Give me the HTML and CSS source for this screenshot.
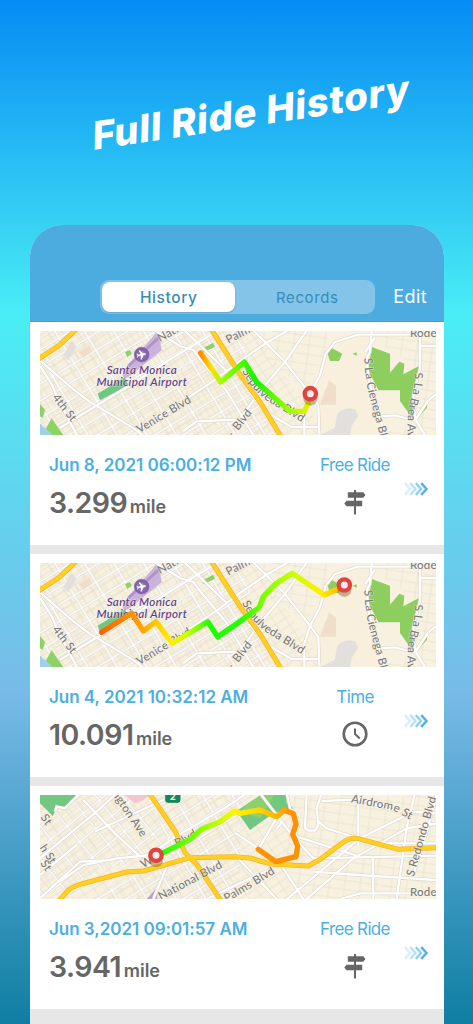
FILE: index.html
```
<!DOCTYPE html>
<html lang="en">
<head>
 <meta charset="UTF-8">
 <meta name="viewport" content="width=device-width,initial-scale=1.0">
 <title>Full Ride History</title>
 <link rel="stylesheet" href="styles.css">
</head>
<body>
<!-- shared shapes -->
<svg class="defs" width="0" height="0">
 <defs>
  <pattern id="grid" width="76" height="44" patternUnits="userSpaceOnUse" patternTransform="rotate(-31)">
   <path class="lane" d="M0 22H76M19 0V44M57 0V44"/>
   <path class="street-edge" d="M0 4H76M38 0V44"/>
   <path class="street-fill" d="M0 4H76M38 0V44"/>
  </pattern>
  <pattern id="fine" width="34" height="24" patternUnits="userSpaceOnUse" patternTransform="rotate(-33)">
   <path class="lane" d="M0 12H34M17 0V24"/>
  </pattern>
  <pattern id="grid-b" width="62" height="60" patternUnits="userSpaceOnUse" patternTransform="rotate(-39)">
   <path class="lane" d="M0 20H62M0 40H62M31 0V60"/>
   <path class="street-edge" d="M0 4H62M4 0V60"/>
   <path class="street-fill" d="M0 4H62M4 0V60"/>
  </pattern>
  <pattern id="loose" width="46" height="28" patternUnits="userSpaceOnUse" patternTransform="rotate(8)">
   <path class="lane" d="M0 14H46M23 0V28"/>
  </pattern>
  <linearGradient id="route1" gradientUnits="userSpaceOnUse" x1="482" x2="812">
   <stop offset="0" stop-color="#ff8a00"/><stop offset=".1" stop-color="#ffe100"/>
   <stop offset=".19" stop-color="#9dff00"/><stop offset=".5" stop-color="#12f500"/>
   <stop offset=".8" stop-color="#9dff00"/><stop offset="1" stop-color="#eef000"/>
  </linearGradient>
  <linearGradient id="route2" gradientUnits="userSpaceOnUse" x1="185" x2="900">
   <stop offset="0" stop-color="#ff6200"/><stop offset=".16" stop-color="#ffa000"/>
   <stop offset=".29" stop-color="#fff000"/><stop offset=".36" stop-color="#c8ff00"/>
   <stop offset=".45" stop-color="#20ff00"/><stop offset=".58" stop-color="#20ff00"/>
   <stop offset=".69" stop-color="#84ff00"/><stop offset=".81" stop-color="#ccff00"/>
   <stop offset=".92" stop-color="#ffee00"/><stop offset="1" stop-color="#ffb400"/>
  </linearGradient>
  <linearGradient id="route3" gradientUnits="userSpaceOnUse" x1="360" x2="735">
   <stop offset="0" stop-color="#1fff00"/><stop offset=".3" stop-color="#80ff00"/>
   <stop offset=".6" stop-color="#fff600"/><stop offset=".8" stop-color="#ffd400"/>
   <stop offset="1" stop-color="#ffa000"/>
  </linearGradient>
  <radialGradient id="badge"><stop offset="0" stop-color="#a18bc5"/><stop offset="1" stop-color="#75599f"/></radialGradient>

  <symbol id="pin" viewBox="-28 -28 56 68">
   <ellipse cx="0" cy="14" rx="21" ry="22" fill="#6b5b2a" opacity=".4"/>
   <circle r="17" fill="#f0eeec" stroke="#e2433f" stroke-width="13"/>
  </symbol>

  <!-- West LA base map -->
  <symbol id="westla" viewBox="0 0 1188 312">
   <rect width="1188" height="312" fill="#f8f1df"/>
   <path fill="url(#fine)" d="M0 0H640L860 312H0z"/>
   <path fill="url(#grid)" d="M0 0H600L700 312H0z"/>
   <path fill="url(#loose)" d="M640 0H860V60L800 180L650 60zM1000 0H1188V312H1010L1120 280L1130 110L1010 30z"/>
   <path fill="#f8efdd" d="M860 60L960 20H985L985 150L1010 312H845L835 200z"/>
   <path fill="#efdfca" d="M115 63L150 43L155 63L130 80zM867 148L888 163V221H840z"/>
   <path fill="#e2dfdd" d="M70 73L95 28L110 48L85 88zM840 312L885 290L890 255Q905 225 945 235L955 255L935 285L930 312z"/>
   <path fill="#c9b2dc" d="M355 -2L365 58L265 138Q240 150 255 113z"/>
   <path stroke="#b094c8" stroke-width="9" d="M365 12L265 105"/>
   <path fill="#6fc782" d="M173 188L255 138L265 163L180 208z"/>
   <path fill="#8ed165" d="M255 63L270 57L275 68L262 78zM485 53L520 35L525 48L490 63zM0 218L15 238L8 262L0 255zM35 262L70 312H35L15 298z"/>
   <path fill="#9fd0ee" d="M0 278L35 308V312H0z"/>
   <path fill="#8dce5f" d="M875 51L907 68L897 90H870L863 68zM938 68L950 64V75zM995 48L1050 68V125L1078 92L1093 98L1090 130L1137 105L1120 205L1125 263L1160 218L1162 228L1125 273L1080 210V178H1015L985 118z"/>
   <g class="street-edge">
    <path d="M0 88L100 175L150 213L210 248L290 298L310 315M0 105L35 160L50 195L110 312M60 290L270 163L410 73L460 43L540 -5M290 303L460 190L530 143L600 90L675 38L785 -27M430 300L470 271L600 265L660 180L735 93L800 -2M625 -17L685 43L735 93L810 188L835 223L838 308M1190 11H955L885 33L857 68L840 133L810 188L793 243V313M625 183L695 253L755 288H835"/>
    <path d="M995 -2L990 63L980 83L985 143L1015 243L1035 313M1140 -2V113L1120 193L1125 263L1155 313M1190 188L1165 208L1125 268L1065 253L1015 257M1140 45H1190M340 -5L420 45L460 57L485 90L560 180L640 312M1005 20L975 63M430 -5L560 120"/>
   </g>
   <g class="street-fill wide">
    <path d="M0 88L100 175L150 213L210 248L290 298L310 315M0 105L35 160L50 195L110 312M60 290L270 163L410 73L460 43L540 -5M290 303L460 190L530 143L600 90L675 38L785 -27M430 300L470 271L600 265L660 180L735 93L800 -2M625 -17L685 43L735 93L810 188L835 223L838 308M1190 11H955L885 33L857 68L840 133L810 188L793 243V313M625 183L695 253L755 288H835"/>
    <path d="M995 -2L990 63L980 83L985 143L1015 243L1035 313M1140 -2V113L1120 193L1125 263L1155 313M1190 188L1165 208L1125 268L1065 253L1015 257M1140 45H1190M340 -5L420 45L460 57L485 90L560 180L640 312M1005 20L975 63M430 -5L560 120"/>
   </g>
   <path class="freeway-edge" d="M-5 84L55 45L110 -6M512 -8L570 83L600 130L660 213L725 320"/>
   <path class="freeway" d="M-5 84L55 45L110 -6M512 -8L570 83L600 130L660 213L725 320"/>
   <g class="road-name">
    <text transform="translate(36 200) rotate(52)">4th St</text>
    <text transform="translate(360 34) rotate(-29)">Natio</text>
    <text transform="translate(565 38) rotate(-27)">Palm</text>
    <text transform="translate(298 307) rotate(-31)">Venice Blvd</text>
    <text transform="translate(594 300) rotate(-52)">Blvd</text>
    <text transform="translate(580 326) rotate(-52)">r</text>
    <path id="sepulveda" fill="none" stroke="none" d="M606 120Q635 183 700 221L805 286"/>
    <text><textPath href="#sepulveda">Sepulveda Blvd</textPath></text>
    <path id="cienega" fill="none" stroke="none" d="M973 81Q975 155 995 220L1028 345"/>
    <text><textPath href="#cienega">S La Cienega Bl</textPath></text>
    <path id="brea" fill="none" stroke="none" d="M1122 126Q1128 160 1112 205Q1098 250 1104 345"/>
    <text><textPath href="#brea">S La Brea Ave</textPath></text>
    <text x="1110" y="19">Rodeo</text>
   </g>
   <g class="airport">
    <circle cx="305" cy="71" r="22" fill="url(#badge)" stroke="#856baf" stroke-width="2"/>
    <path fill="#fff" transform="translate(305 71) rotate(78)" d="M0-14Q3-12 3-5L14 3V6L3 3L2 10L6 13V15L0 13L-6 15V13L-2 10L-3 3L-14 6V3L-3-5Q-3-12 0-14z"/>
    <text x="305" y="130" textLength="210">Santa Monica</text>
    <text x="305" y="164" textLength="271">Municipal Airport</text>
   </g>
  </symbol>

  <!-- Mid-City base map -->
  <symbol id="midcity" viewBox="0 0 1188 312">
   <rect width="1188" height="312" fill="#f8f1df"/>
   <path fill="url(#fine)" d="M0 0H750V312H0z"/>
   <path fill="url(#loose)" d="M760 0H1188V312H740V180z"/>
   <path fill="url(#grid-b)" d="M0 0H320L400 180L200 220L0 312z"/>
   <path fill="url(#grid)" d="M330 0H600V312H150L400 190z"/>
   <path fill="#72c781" d="M0 -2H116L78 38L52 38L38 63L0 25zM590 48L665 -2H740V25L760 40L700 55L630 105z"/>
   <path fill="#8dd16c" d="M625 25L670 -2H705L660 70L600 50z"/>
   <path fill="#f4c5d1" d="M250 -2H330L310 15L285 25z"/>
   <path fill="#b9a0d2" d="M320 312L352 277V312z"/>
   <g class="street-edge">
    <path d="M45 50L50 35L75 40L120 -5M130 15L225 115L300 185M0 190L60 140L170 50L230 -5M165 110L240 75L380 10M60 260L130 210L230 190L330 180L400 130L560 35L620 -5M0 240L110 150M0 310L120 200L220 195M340 312L380 215L365 190M500 312L630 250L700 220M660 -5L760 125L820 190L1190 182"/>
    <path d="M800 -5L795 98L805 107H825L835 90L830 40L845 -5M845 18L960 13L1050 43M740 -5L770 125L950 182M830 75L860 100L1000 145H1190M1188 55L1120 50L960 130L840 230L720 330M1190 85L1100 100L940 190L800 312M955 -5V150M998 182L1000 312M820 230L955 240L1190 255M1125 -5L1100 100L1070 312M585 113L720 205L790 312M710 100L725 85L712 65L655 163M1190 295H960L900 312M585 180L710 312M1190 0L1160 110L1120 240"/>
   </g>
   <g class="street-fill wide">
    <path d="M45 50L50 35L75 40L120 -5M130 15L225 115L300 185M0 190L60 140L170 50L230 -5M165 110L240 75L380 10M60 260L130 210L230 190L330 180L400 130L560 35L620 -5M0 240L110 150M0 310L120 200L220 195M340 312L380 215L365 190M500 312L630 250L700 220M660 -5L760 125L820 190L1190 182"/>
    <path d="M800 -5L795 98L805 107H825L835 90L830 40L845 -5M845 18L960 13L1050 43M740 -5L770 125L950 182M830 75L860 100L1000 145H1190M1188 55L1120 50L960 130L840 230L720 330M1190 85L1100 100L940 190L800 312M955 -5V150M998 182L1000 312M820 230L955 240L1190 255M1125 -5L1100 100L1070 312M585 113L720 205L790 312M710 100L725 85L712 65L655 163M1190 295H960L900 312M585 180L710 312M1190 0L1160 110L1120 240"/>
   </g>
   <path class="freeway-edge" d="M50 325L85 285Q105 270 150 260L260 231L310 228L370 211L450 188L585 185L635 190Q680 205 705 208L805 213L845 190L905 145Q930 125 955 131L1075 163L1190 158M328 -5L405 108L435 173L470 208L545 320"/>
   <path class="freeway" d="M50 325L85 285Q105 270 150 260L260 231L310 228L370 211L450 188L585 185L635 190Q680 205 705 208L805 213L845 190L905 145Q930 125 955 131L1075 163L1190 158M328 -5L405 108L435 173L470 208L545 320"/>
   <rect x="374" y="-18" width="49" height="43" rx="10" fill="#128653" stroke="#eef4ee" stroke-width="3"/>
   <text class="shield" x="398" y="16">2</text>
   <g class="road-name">
    <text transform="translate(1 67) rotate(57)">St</text>
    <text transform="translate(-2 158) rotate(57)">h St</text>
    <text transform="translate(0 205) rotate(57)">St</text>
    <text transform="translate(215 -4) rotate(56)">ngton Ave</text>
    <text transform="translate(310 220) rotate(-30)">W</text>
    <text transform="translate(412 157) rotate(-29)">Blvd</text>
    <text transform="translate(362 316) rotate(-28)">National Blvd</text>
    <text transform="translate(560 322) rotate(-31)">Palms Blvd</text>
    <path id="airdrome" fill="none" stroke="none" d="M932 22L1055 45Q1080 55 1140 92"/>
    <text><textPath href="#airdrome">Airdrome St</textPath></text>
    <text transform="translate(1121 246) rotate(-74)">S Redondo Blvd</text>
    <text x="1110" y="302">Rodeo</text>
   </g>
  </symbol>

  <symbol id="signpost" viewBox="0 0 22 25">
   <path fill="#666" d="M10 0h2v2.300h7.300l2.200 2.800-2.200 2.700H12v3h6.200v5.500H12V24.500h-2v-8.200H2.500L.3 13.500l2.200-2.700H10v-3H3.800V2.300H10z"/>
  </symbol>
  <symbol id="clock" viewBox="0 0 26 26">
   <circle cx="13" cy="13" r="11.300" fill="none" stroke="#666" stroke-width="2.600"/>
   <path fill="none" stroke="#666" stroke-width="2" d="M13 7.500V13L17.800 17.500"/>
  </symbol>
  <symbol id="arrows" viewBox="0 0 26 14">
   <g fill="none" stroke="#4bafe1" stroke-width="2.500">
    <path opacity=".2" d="M1.800 1.200L7 7L1.800 12.800"/>
    <path opacity=".38" d="M7.300 1.200L12.500 7L7.300 12.800"/>
    <path opacity=".6" d="M12.800 1.200L18 7L12.800 12.800"/>
    <path opacity=".95" d="M18.200 1.200L23.500 7L18.200 12.800"/>
   </g>
  </symbol>
 </defs>
</svg>

<h1 class="headline"><span>Full Ride History</span></h1>

<main class="phone">
 <header class="navbar">
  <div class="segmented">
   <div class="segment active">History</div>
   <div class="segment">Records</div>
  </div>
  <div class="edit">Edit</div>
 </header>

 <section class="ride">
  <svg class="map" viewBox="0 0 1188 312" preserveAspectRatio="none">
   <use href="#westla" width="1188" height="312"/>
   <path class="route" stroke="url(#route1)" d="M482 66L542 153L613 93L650 153L750 241H793L812 200"/>
   <use href="#pin" x="783" y="160" width="56" height="68"/>
  </svg>
  <div class="info">
   <div class="summary">
    <div class="date">Jun 8, 2021 06:00:12 PM</div>
    <div class="distance"><b>3.299</b> mile</div>
   </div>
   <div class="kind">
    <div>Free Ride</div>
    <svg class="signpost"><use href="#signpost"/></svg>
   </div>
   <svg class="arrows"><use href="#arrows"/></svg>
  </div>
 </section>

 <section class="ride">
  <svg class="map" viewBox="0 0 1188 312" preserveAspectRatio="none">
   <use href="#westla" width="1188" height="312"/>
   <path class="route" stroke="url(#route2)" d="M185 208L275 151L310 204L348 176L397 241L503 176L533 221L585 186L657 134L670 101L705 64L757 31L853 96L900 75"/>
   <use href="#pin" x="885" y="38" width="56" height="68"/>
  </svg>
  <div class="info">
   <div class="summary">
    <div class="date">Jun 4, 2021 10:32:12 AM</div>
    <div class="distance"><b>10.091</b> mile</div>
   </div>
   <div class="kind">
    <div>Time</div>
    <svg class="clock"><use href="#clock"/></svg>
   </div>
   <svg class="arrows"><use href="#arrows"/></svg>
  </div>
 </section>

 <section class="ride">
  <svg class="map" viewBox="0 0 1188 312" preserveAspectRatio="none">
   <use href="#midcity" width="1188" height="312"/>
   <path class="route" stroke="#ff9100" d="M733 45L760 56L768 88L758 118L773 153L768 185L707 200L655 163"/>
   <path class="route" stroke="url(#route3)" d="M360 178L450 133L485 103L540 80L585 48L600 55L660 45L710 65L733 45"/>
   <use href="#pin" x="320" y="153" width="56" height="68"/>
  </svg>
  <div class="info">
   <div class="summary">
    <div class="date">Jun 3,2021 09:01:57 AM</div>
    <div class="distance"><b>3.941</b> mile</div>
   </div>
   <div class="kind">
    <div>Free Ride</div>
    <svg class="signpost"><use href="#signpost"/></svg>
   </div>
   <svg class="arrows"><use href="#arrows"/></svg>
  </div>
 </section>
</main>
</body>
</html>
```
FILE: styles.css
```
*{
  box-sizing: border-box;
}
body{
  margin: 0;
  height: 1024px;
  overflow: hidden;
  font-family: Inter, "Liberation Sans", sans-serif;
  background: linear-gradient(#068cf4 0, #4aedf5 314px, #78bbe8 692px, #0f7ea2 1024px);
}
.defs{
  position: absolute;
}
.headline{
  margin: 0;
  height: 225px;
  display: flex;
  justify-content: center;
  align-items: center;
  padding: 0 0 2px 29px;
  color: #fff;
  font-size: 38.500px;
  font-weight: 800;
  letter-spacing: .7px;
  white-space: nowrap;
}
.headline span{
  transform: rotate(-8.500deg) skewX(-10deg);
}
.phone{
  width: 414px;
  height: 799px;
  margin-left: 30px;
  overflow: hidden;
  border-radius: 32px 32px 0 0;
  background: #e7e7e7;
}
.navbar{
  display: flex;
  justify-content: flex-end;
  align-items: flex-end;
  height: 97px;
  padding: 0 17px 7px 0;
  background: #4dacdf;
  border-bottom: 1px solid #469fd0;
}
.segmented{
  display: flex;
  width: 275px;
  height: 34px;
  padding: 2px;
  border-radius: 9px;
  background: #84c4e9;
}
.segment{
  flex: 1;
  padding-left: 6px;
  line-height: 31px;
  text-align: center;
  font-size: 15px;
  letter-spacing: .6px;
  color: #398bb7;
}
.segment.active{
  flex: 0 0 133px;
  height: 30px;
  padding-left: 0;
  font-size: 15.500px;
  font-weight: 500;
  border-radius: 8px;
  background: #fff;
  box-shadow: 0 1px 2px rgba(0,60,100,.25);
}
.edit{
  margin-left: 18px;
  line-height: 35px;
  font-size: 18px;
  letter-spacing: .4px;
  color: #fff;
}
.ride{
  height: 223px;
  margin-bottom: 9px;
  padding: 9px 8px 0 10px;
  background: #fff;
}
.map{
  display: block;
  width: 396px;
  height: 104px;
}
.info{
  display: flex;
  padding: 19px 7px 0 9px;
}
.summary{
  flex: 1;
}
.date{
  font-size: 17px;
  line-height: 22px;
  font-weight: 600;
  letter-spacing: -.02px;
  color: #4bafe1;
}
.distance{
  margin-top: 7px;
  font-size: 18px;
  line-height: 40px;
  font-weight: 600;
  color: #666;
  word-spacing: -2px;
}
.distance b{
  font-size: 28.500px;
  font-weight: 600;
  letter-spacing: -.5px;
}
.kind{
  display: flex;
  flex-direction: column;
  align-items: center;
  width: 80px;
  font-size: 17px;
  line-height: 22px;
  letter-spacing: -.65px;
  color: #4bafe1;
}
.signpost{
  width: 22px;
  height: 25px;
  margin-top: 14px;
}
.clock{
  width: 26px;
  height: 26px;
  margin-top: 13px;
}
.arrows{
  width: 26px;
  height: 14px;
  margin: 28px 0 0 8px;
}

/* map drawing */
.lane{
  fill: none;
  stroke: #e6dfcf;
  stroke-width: 2;
}
.street-edge{
  fill: none;
  stroke: #d8d3c8;
  stroke-width: 8;
}
.street-fill{
  fill: none;
  stroke: #fff;
  stroke-width: 5;
}
g.street-edge{
  stroke-width: 10;
}
.street-fill.wide{
  stroke-width: 7;
}
.freeway-edge{
  fill: none;
  stroke: #f4b02c;
  stroke-width: 15;
}
.freeway{
  fill: none;
  stroke: #ffd022;
  stroke-width: 11;
}
.road-name{
  font: 500 34.500px Lato, sans-serif;
  letter-spacing: .6px;
  fill: #7d7c7b;
  stroke: rgba(250,246,234,.7);
  stroke-width: 3;
  paint-order: stroke;
}
.airport text{
  font: italic 500 35px Lato, sans-serif;
  text-anchor: middle;
  fill: #5d4085;
  stroke: rgba(243,234,232,.7);
  stroke-width: 3;
  paint-order: stroke;
}
.shield{
  font: 700 28px Inter, sans-serif;
  text-anchor: middle;
  fill: #fff;
}
.route{
  fill: none;
  stroke-width: 16;
  stroke-linejoin: round;
  stroke-linecap: round;
}
```
